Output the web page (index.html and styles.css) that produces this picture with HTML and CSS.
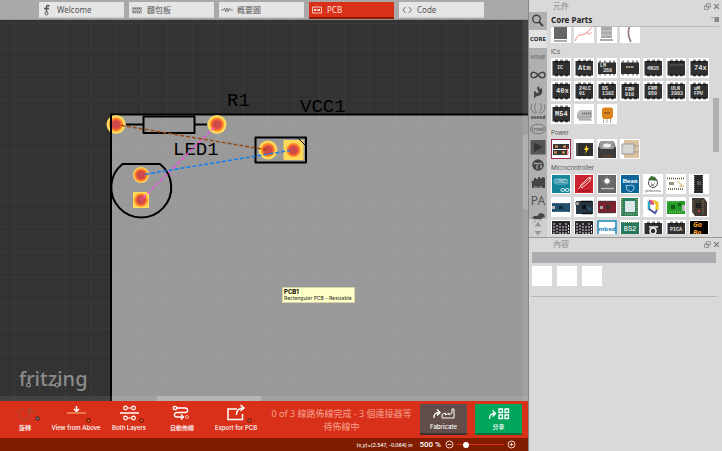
FILE: index.html
```html
<!DOCTYPE html>
<html>
<head>
<meta charset="utf-8">
<title>Fritzing</title>
<link rel="stylesheet" href="styles.css">
</head>
<body>
<svg class="defs" aria-hidden="true">
  <defs>
    <symbol id="chip" viewBox="0 0 20 20">
      <path d="M4 1.5h3v17H4zM9 1.5h3v17H9zM14 1.5h3v17h-3z" fill="#888"/>
      <rect x="1.500" y="3" width="17.5" height="14.500" fill="#303030"/>
      <path d="M4 3h3v1.500H4zM9 3h3v1.500H9zM14 3h3v1.500h-3zM4 16h3v1.500H4zM9 16h3v1.500H9zM14 16h3v1.500h-3z" fill="#171717"/>
    </symbol>
    <symbol id="chip-low" viewBox="0 0 20 20">
      <path d="M2 2.500h2v15H2zM7 2.500h2v15H7zM12 2.500h2v15h-2zM16 2.500h2v15h-2z" fill="#999"/>
      <rect x="1" y="4.500" width="18" height="11.500" fill="#303030"/>
    </symbol>
    <symbol id="pinboard" viewBox="0 0 20 20">
      <rect x="1" y="1" width="18" height="19" fill="#29252b"/>
      <path d="M3 3v17M6 5v15M9 3v17M12 6v14M15 3v17M17.500 5v15" stroke="#ddd" stroke-width="1" stroke-dasharray="2 1"/>
    </symbol>
    <symbol id="float" viewBox="0 0 6 6"><path d="M2 .5h3.500v3H2zM.5 2.500H4v3H.5z" fill="none" stroke="#888" stroke-width=".7"/></symbol>
    <symbol id="close" viewBox="0 0 6 6"><path d="M1 1l4 4M5 1L1 5" stroke="#777" stroke-width="1"/></symbol>
    <symbol id="drop" viewBox="0 0 5 5"><circle cx="2.500" cy="2.500" r="2.300" fill="#801c00"/><path d="M1.300 2h2.400L2.500 3.500z" fill="#f0a090"/></symbol>
  </defs>
</svg>
<div class="app">
  <main class="editor">
    <nav class="views">
      <button class="view"><svg class="view-icon" viewBox="0 0 12 12"><path d="M8.500 2C6 .5 5.500 2 5.500 4v4M3 4.500h5" fill="none" stroke="#555" stroke-width="1.500"/><circle cx="5.500" cy="9.500" r="1.400" fill="none" stroke="#555"/></svg>Welcome</button>
      <button class="view"><svg class="view-icon" viewBox="0 0 12 12"><rect x="1" y="3" width="10" height="6.500" fill="#aaa"/><path d="M2 4.500h8M2 8h8" stroke="#666" stroke-dasharray="1 1"/><path d="M2 6.200h8" stroke="#ddd" stroke-dasharray="1 1"/></svg>麵包板</button>
      <button class="view"><svg class="view-icon" viewBox="0 0 12 12"><path d="M0 6h2.500l1-2 1.300 4L6 4l1.300 4 1.200-4 1 2H12" fill="none" stroke="#777" stroke-width=".9"/></svg>概要圖</button>
      <button class="view view-active"><svg class="view-icon" viewBox="0 0 12 12"><path d="M1.500 3h9v6h-9z" fill="none" stroke="#ffc8bd"/><path d="M3 6h6" stroke="#ffc8bd"/><circle cx="4" cy="6" r="1" fill="#fff"/><circle cx="8" cy="6" r="1" fill="#fff"/></svg>PCB</button>
      <button class="view"><svg class="view-icon" viewBox="0 0 12 12"><path d="M4.500 3L2 6l2.500 3M8 3l2.500 3L8 9" fill="none" stroke="#777"/></svg>Code</button>
    </nav>

    <section class="canvas">
      <svg class="board" width="100%" height="100%">
        <defs>
          <pattern id="grid" x="14" y="3" width="25.400" height="25.400" patternUnits="userSpaceOnUse">
            <path d="M.5 0v25.400M0 .5h25.400" stroke="#fff" stroke-opacity=".035" fill="none"/>
          </pattern>
        </defs>
        <rect x="111" y="94.500" width="4000" height="4000" fill="#999" stroke="#000" stroke-width="2"/>
        <rect width="100%" height="100%" fill="url(#grid)"/>
        <g font-family="Liberation Mono, monospace" font-size="19" fill="#000">
          <text x="227" y="86">R1</text>
          <text x="300" y="92">VCC1</text>
          <text x="173" y="135">LED1</text>
        </g>
        <g>
          <circle cx="116" cy="104.500" r="9.500" fill="#ffd95a"/><circle cx="116" cy="104.500" r="7" fill="#ff8c2b"/><circle cx="116" cy="104.500" r="5.500" fill="#f1602d"/><circle cx="116" cy="104.500" r="4.300" fill="#cf4a4a"/>
          <circle cx="217" cy="104.500" r="9.500" fill="#ffd95a"/><circle cx="217" cy="104.500" r="7" fill="#ff8c2b"/><circle cx="217" cy="104.500" r="5.500" fill="#f1602d"/><circle cx="217" cy="104.500" r="4.300" fill="#cf4a4a"/>
          <circle cx="141" cy="155" r="8" fill="#ffd95a"/><circle cx="141" cy="155" r="6.800" fill="#ff8c2b"/><circle cx="141" cy="155" r="5.300" fill="#f1602d"/><circle cx="141" cy="155" r="4.300" fill="#cf4a4a"/>
          <rect x="133" y="172" width="16" height="16" fill="#ffd95a"/><circle cx="141" cy="180" r="6.800" fill="#ff8c2b"/><circle cx="141" cy="180" r="5.300" fill="#f1602d"/><circle cx="141" cy="180" r="4.300" fill="#cf4a4a"/>
          <circle cx="268" cy="130" r="9.500" fill="#ffd95a"/><circle cx="268" cy="130" r="7" fill="#ff8c2b"/><circle cx="268" cy="130" r="5.500" fill="#f1602d"/><circle cx="268" cy="130" r="4.300" fill="#cf4a4a"/>
          <rect x="283.500" y="120" width="20" height="20" fill="#ffd95a"/><circle cx="293.500" cy="130" r="7" fill="#ff8c2b"/><circle cx="293.500" cy="130" r="5.500" fill="#f1602d"/><circle cx="293.500" cy="130" r="4.300" fill="#cf4a4a"/>
        </g>
        <path d="M111 95v20" stroke="#000" stroke-width="2"/>
        <g fill="none" stroke="#000" stroke-width="2" stroke-linejoin="round">
          <path d="M143.500 96.500h51v16.500h-51zM126 104.500h17.500M194.500 104.500H207"/>
          <path d="M255.500 117.500H306v25h-50.500z"/>
          <path d="M298 118l8 8" stroke-width="1"/>
          <path d="M122.500 144H160A30 30 0 1 1 122.500 144z"/>
        </g>
        <g fill="none" stroke-width="1.500" stroke-dasharray="4 2">
          <path d="M121 105.300L268 130" stroke="#964b14"/>
          <path d="M214 107.500L141 180" stroke="#f04fe0"/>
          <path d="M145 154.300L290 130.500" stroke="#1480f0"/>
        </g>
      </svg>
      <div class="logo">fritzing<svg class="logo-nodes" viewBox="0 0 70 24"><g fill="#333" stroke="#8b8b8b" stroke-width="1.200"><circle cx="9.500" cy="18" r="1.900"/><circle cx="38" cy="18" r="1.900"/></g></svg></div>
      <div class="tooltip"><strong>PCB1</strong><span>Rectangular PCB - Resizable</span></div>
      <div class="scroll-y"><i></i></div>
      <div class="scroll-x"><i></i></div>
    </section>

    <footer class="toolbar">
      <button class="tool"><svg class="tool-icon" viewBox="0 0 32 20"><path d="M15 5.500a5.500 5.500 0 1 0 6 6V7M17.500 10L21 6l4 4" fill="none" stroke="#b34732" stroke-width="1.500"/><use class="drop-off" href="#drop" x="26" y="13" width="5" height="5"/></svg>旋轉</button>
      <button class="tool"><svg class="tool-icon" viewBox="0 0 32 20"><path d="M16.500 3v5M14 6l2.500 2.500L19 6" fill="none" stroke="#fff" stroke-width="1.500"/><path d="M7 10h19" stroke="#ffc07a"/><use href="#drop" x="26" y="15" width="5" height="5"/></svg>View from Above</button>
      <button class="tool"><svg class="tool-icon" viewBox="0 0 32 20"><path d="M7 10h19" stroke="#fff" stroke-width="1.500"/><g fill="none" stroke="#fff" stroke-width="1.200"><circle cx="12.500" cy="5" r="1.800"/><circle cx="20.500" cy="5" r="1.800"/><path d="M14.500 5h4M14.500 15h4"/><circle cx="12.500" cy="15" r="1.800"/><circle cx="20.500" cy="15" r="1.800"/></g><use href="#drop" x="26" y="15" width="5" height="5"/></svg>Both Layers</button>
      <button class="tool"><svg class="tool-icon" viewBox="0 0 32 20"><g fill="none" stroke="#fff" stroke-width="1.300"><circle cx="9" cy="5" r="1.700"/><path d="M11 5h8c3.500 0 3.500 4.500 0 4.500h-8c-3.500 0-3.500 4.500 0 4.500h6M15 11.500l2.500 2.500-2.500 2.500"/></g><circle cx="21" cy="14" r="1.500" fill="none" stroke="#ffb090"/></svg>自動佈線</button>
      <button class="tool"><svg class="tool-icon" viewBox="0 0 32 20"><path d="M17 6H8v10.500h14.500V11M16.500 12c0-5 2-7 7-7M20.500 2l3.500 3-3.500 3" fill="none" stroke="#fff" stroke-width="1.500"/><use href="#drop" x="27" y="15" width="5" height="5"/></svg>Export for PCB</button>
      <p class="message">0 of 3 線路佈線完成 - 3 個連接器等待佈線中</p>
      <button class="action fabricate"><svg class="action-icon" viewBox="0 0 24 14"><path d="M2 11c0-4 1-5.500 5-5.500M5 2.500l3 3-3 3" fill="none" stroke="#fff" stroke-width="1.400"/><path d="M10 11V7.500L13.500 6v2L17 6v2l3-2V2h2v9z" fill="none" stroke="#fff"/></svg>Fabricate</button>
      <button class="action share"><svg class="action-icon" viewBox="0 0 24 14"><path d="M2.500 12c0-4 1-5.500 5-5.500M5.500 3.500l3 3-3 3" fill="none" stroke="#fff" stroke-width="1.400"/><path d="M12 2h3.500v3.500H12zM18 2h3.500v3.500H18zM12 8h3.500v3.500H12zM18 8h3.500v3.500H18z" fill="none" stroke="#fff" stroke-width="1.300"/></svg>分享</button>
    </footer>

    <div class="status">
      <span class="coords">(x,y)=(2.547, -0.064) in</span>
      <label class="zoom-value" for="zoom">500 %</label>
      <button class="zoom-button" aria-label="Zoom out"><svg viewBox="0 0 9 9"><circle cx="4.500" cy="4.500" r="3.500" fill="none" stroke="#f3d5cc"/><path d="M2.800 4.500h3.400" stroke="#f3d5cc"/></svg></button>
      <input id="zoom" class="zoom" type="range" min="0" max="100" value="14">
      <button class="zoom-button" aria-label="Zoom in"><svg viewBox="0 0 9 9"><circle cx="4.500" cy="4.500" r="3.500" fill="none" stroke="#f3d5cc"/><path d="M2.800 4.500h3.400M4.500 2.800v3.400" stroke="#f3d5cc"/></svg></button>
    </div>
  </main>

  <aside class="side">
    <section class="parts">
      <header class="dock"><h2>元件</h2><button aria-label="Float"><svg><use href="#float"/></svg></button><button aria-label="Close"><svg><use href="#close"/></svg></button></header>
      <div class="bins">
        <nav class="bin-tabs">
          <button class="bin" aria-label="Search"><svg viewBox="0 0 18 18"><circle cx="7.500" cy="7" r="3.800" fill="none" stroke="#444" stroke-width="1.400"/><path d="M10 10l4 4" stroke="#444" stroke-width="2"/></svg></button>
          <button class="bin bin-active">CORE</button>
          <button class="bin bin-mine">MINE</button>
          <button class="bin" aria-label="Arduino"><svg viewBox="0 0 18 18"><path d="M9 9C7 6 2 5 2 9s5 3 7 0 7-4 7 0-5 3-7 0z" fill="none" stroke="#444" stroke-width="1.500"/></svg></button>
          <button class="bin" aria-label="SparkFun"><svg viewBox="0 0 18 18"><path d="M5 15V7.500h2c0 2 2.500 2 2.500 0S7 5 8.500 3c1.500-1 2 0 1.500 1s2 1.500 2-.5c2 2 2 8-3 8.500-2 0-3 1-4 3z" fill="#444"/></svg></button>
          <button class="bin" aria-label="Seeed"><svg viewBox="0 0 18 18"><path d="M7 12C2 9 1 6 3 2M11 12c5-3 6-6 4-10M8 11C5 7 5 4 7 1M10 11c3-4 3-7 1-10" fill="none" stroke="#777"/><text x="9" y="16.500" text-anchor="middle" font-size="5" font-weight="700" fill="#444">seeed</text></svg></button>
          <button class="bin" aria-label="Intel"><svg viewBox="0 0 18 18"><ellipse cx="9" cy="9" rx="7.500" ry="4.800" fill="none" stroke="#777"/><text x="9" y="11" text-anchor="middle" font-size="6" fill="#555">intel</text></svg></button>
          <button class="bin" aria-label="Play"><svg viewBox="0 0 18 18"><path d="M1.500 2h15v14.500h-15z" fill="#555"/><path d="M5 4.500l8.500 4.700L5 14z" fill="#343434"/></svg></button>
          <button class="bin" aria-label="Parallax"><svg viewBox="0 0 18 18"><circle cx="9" cy="9" r="5.800" fill="#444"/><path d="M5 8c2-2 3 0 4 0s2-2 4-.5M8 9v4M11 9c2 0 2 3 0 2.500" fill="none" stroke="#aaa" stroke-width="1.200"/></svg></button>
          <button class="bin" aria-label="Locomotive"><svg viewBox="0 0 18 18"><path d="M2 8l3-2V4h2v1h2V3h2v2l3-2 2 1v10H3V9z" fill="#444"/><path d="M5 14a1.500 1.500 0 0 1 3 0M10 14a1.500 1.500 0 0 1 3 0" fill="none" stroke="#aaa"/></svg></button>
          <button class="bin bin-pa">PA</button>
          <button class="bin" aria-label="Animal"><svg viewBox="0 0 18 18"><path d="M2 9l3-3 3 0 3-3 4 1 1 3-3 1-1 3H9l-1-2-2 4H4l1-5z" fill="#444"/></svg></button>
          <div class="bin-scroll"><svg viewBox="0 0 18 18"><path d="M5.500 7.500L9 2.500l3.500 5zM5.500 12h7L9 16.500z" fill="#999"/></svg></div>
        </nav>
        <div class="bin-content">
          <div class="bin-title"><h3>Core Parts</h3><button aria-label="Menu"><svg class="menu-icon" viewBox="0 0 8 6"><path d="M0 1h2.500L1.200 2.500zM3.500 1H8v5H3.500z" fill="#888"/></svg></button></div>
          <div class="bin-list">
            <div class="tiles tiles-cut">
              <svg class="tile" viewBox="0 0 20 20"><path d="M3 2h13v14H3z" fill="#666"/><path d="M3 17h13v2H3z" fill="#aaa"/></svg>
              <svg class="tile" viewBox="0 0 20 20"><path d="M1.500 18c1-9 8-4 12-9s5-3 4-6M13 9c1 4 5 1 4 0" fill="none" stroke="#f28a86"/></svg>
              <svg class="tile" viewBox="0 0 20 20"><path d="M4 3h11v12H4zM3 16h13v2H3z" fill="#aaa"/><path d="M4 8h11M4 12h11" stroke="#ccc"/></svg>
              <svg class="tile" viewBox="0 0 20 20"><path d="M10 2c-2 5-2 12 1 17" fill="none" stroke="#9b7b80" stroke-width="1.700"/></svg>
            </div>
            <h4>ICs</h4>
            <div class="tiles chips">
              <svg class="tile" viewBox="0 0 20 20"><use href="#chip"/><text x="6" y="11">IC</text></svg>
              <svg class="tile" viewBox="0 0 20 20"><use href="#chip"/><text class="big" x="4" y="12">Atm</text></svg>
              <svg class="tile" viewBox="0 0 20 20"><use href="#chip-low"/><text x="3" y="9">LM</text><text x="6" y="14">358</text></svg>
              <svg class="tile" viewBox="0 0 20 20"><use href="#chip-low"/><path d="M6 9h8" stroke="#a89c88" stroke-width="2" stroke-dasharray="2 .5"/></svg>
              <svg class="tile" viewBox="0 0 20 20"><use href="#chip"/><text x="4" y="12">4N35</text></svg>
              <svg class="tile" viewBox="0 0 20 20"><use href="#chip"/><path d="M4 7h14" stroke="#76695c" stroke-dasharray="2 .5"/></svg>
              <svg class="tile" viewBox="0 0 20 20"><use href="#chip"/><text class="big" x="5" y="12">74x</text></svg>
              <svg class="tile" viewBox="0 0 20 20"><use href="#chip"/><text class="big" x="5" y="12">40x</text></svg>
              <svg class="tile" viewBox="0 0 20 20"><use href="#chip"/><text x="5" y="9">24LC</text><text x="5" y="14">01</text></svg>
              <svg class="tile" viewBox="0 0 20 20"><use href="#chip"/><text x="5" y="9">DS</text><text x="5" y="14">1302</text></svg>
              <svg class="tile" viewBox="0 0 20 20"><use href="#chip"/><text x="5" y="10">FRM</text><text x="5" y="15">010</text></svg>
              <svg class="tile" viewBox="0 0 20 20"><use href="#chip"/><text x="5" y="9">FRM</text><text x="5" y="14">050</text></svg>
              <svg class="tile" viewBox="0 0 20 20"><use href="#chip"/><text x="5" y="9">ULN</text><text x="5" y="14">2003</text></svg>
              <svg class="tile" viewBox="0 0 20 20"><use href="#chip"/><text x="5" y="9">uM</text><text x="5" y="14">FPU</text></svg>
              <svg class="tile" viewBox="0 0 20 20"><use href="#chip"/><text class="big" x="4" y="12">M54</text></svg>
              <svg class="tile" viewBox="0 0 20 20"><path d="M3 9l3-3h12v7l-2 3H5l-2-2z" fill="#bbb"/><path d="M3 13h15M5 16h13" stroke="#999"/><path d="M8 9.500h9" stroke="#777" stroke-width="2" stroke-dasharray="1.500 .5"/></svg>
              <svg class="tile" viewBox="0 0 20 20"><path d="M6.500 14v5M10 14v5M13.500 14v5" stroke="#aaa"/><path d="M5 5l1.500-1.500h8L16 5v8l-2 2H7l-2-2z" fill="#d9861c"/><path d="M7 9h6" stroke="#a86513" stroke-width="2"/></svg>
            </div>
            <h4>Power</h4>
            <div class="tiles">
              <svg class="tile tile-selected" viewBox="0 0 20 20"><path d="M2 5h16v5H2zM2 11h14v5H2z" fill="#333"/><path d="M4 7.500h3M12 7.500h3M3 13.500h3M11 13.500h3" stroke="#c88650" stroke-width="2.500"/><path d="M17 8c-3 3 2 4-1 8" fill="none" stroke="#d33"/></svg>
              <svg class="tile" viewBox="0 0 20 20"><path d="M2 4h17v13H2z" fill="#303030"/><path d="M2 4h2v13H2z" fill="#555"/><path d="M13 6l-3 5h2l-1 4 4-6h-2z" fill="#f8d329"/></svg>
              <svg class="tile" viewBox="0 0 20 20"><path d="M1 9l2-6 2-1h10l2 1 2 6v10H1z" fill="#3c3c3c"/><path d="M2 8l1-5 2-1h10l2 1 1 5-2 2H4z" fill="#999"/><ellipse cx="10" cy="6.500" rx="4" ry="2" fill="#eee"/><path d="M5 17h10" stroke="#7d4a22"/></svg>
              <svg class="tile" viewBox="0 0 20 20"><path d="M4 1h15v18H4z" fill="#dec3a0"/><path d="M2 5h12v10H2z" fill="#d7d7d2" stroke="#999"/><path d="M14 7h5M14 13h5" stroke="#999"/></svg>
            </div>
            <h4>Microcontroller</h4>
            <div class="tiles">
              <svg class="tile" viewBox="0 0 20 20"><path d="M1 1h18v18H1z" fill="#16859a"/><rect x="3" y="5" width="14" height="5" rx="2.500" fill="none" stroke="#9cd3dc" stroke-width=".7"/><text x="10" y="9.300" font-size="5" text-anchor="middle" fill="#fff">UNO</text><path d="M14 16c-1-2-4-2-4 0s3 2 4 0 4-2 4 0-3 2-4 0z" fill="none" stroke="#fff"/></svg>
              <svg class="tile" viewBox="0 0 20 20"><path d="M1 1h18v18H1z" fill="#c9232d"/><path d="M4 15L16 4M6 12l8-8 3-1-1 4-8 7z" stroke="#f6c9cb" fill="none"/><path d="M4 17h12" stroke="#8c101a"/></svg>
              <svg class="tile" viewBox="0 0 20 20"><path d="M1 1h18v18H1z" fill="#666"/><path d="M10 2v10M5 7h10M6.500 3.500l7 7M13.500 3.500l-7 7" stroke="#aaa" stroke-width=".7"/><circle cx="10" cy="7" r="2.500" fill="#fff"/><path d="M4 14.500h13" stroke="#bbb" stroke-width="1.500"/></svg>
              <svg class="tile" viewBox="0 0 20 20"><path d="M1 1h18v18H1z" fill="#0b6599"/><text x="10" y="9" font-size="7" font-weight="700" text-anchor="middle" fill="#fff" font-family="Liberation Serif, serif">Bean</text><path d="M6 11l3 1 1-1 4 1v3l-3 3-4-2z" fill="none" stroke="#9ccbe4"/></svg>
              <svg class="tile" viewBox="0 0 20 20"><circle cx="10" cy="9" r="4.500" fill="#fff" stroke="#444"/><path d="M5 6l3-4 4 1 3 4z" fill="#416c35"/><path d="M8 9h.8M11 9h.8M8 11h3" stroke="#333"/><text x="10" y="18" font-size="4" text-anchor="middle" fill="#333">pinoccio</text></svg>
              <svg class="tile" viewBox="0 0 20 20"><path d="M1 4.500h17M2 15h16" stroke="#544c2a" stroke-width="1.500" stroke-dasharray="1 1"/><path d="M3 8h5v3H3z" fill="#9a9478"/><path d="M11 7l5 4M13 12h5" stroke="#c7ad4d"/></svg>
              <svg class="tile" viewBox="0 0 20 20"><path d="M5 1h9v18H5z" fill="#28282a"/><path d="M8 7h4v4H8z" fill="#555"/><path d="M5.500 2v16M13.500 2v16" stroke="#858377" stroke-dasharray="1 1"/></svg>
              <svg class="tile" viewBox="0 0 20 20"><path d="M1 6h18v9H1z" fill="#20506d"/><path d="M2 6.500h16M2 14.500h16" stroke="#5f7f8f" stroke-dasharray="1 1"/><path d="M8 9h4v3H8z" fill="#122b39"/><path d="M1 9h3v3H1z" fill="#bbb"/></svg>
              <svg class="tile" viewBox="0 0 20 20"><path d="M2 4h17v13H2z" fill="#263642"/><path d="M1 5h4v3H1z" fill="#999"/><path d="M8 8h4v4H8z" fill="#111"/><path d="M7 4.500h11M8 16.500h10" stroke="#111" stroke-width="1.500"/><path d="M13 10l4 3" stroke="#377da8"/></svg>
              <svg class="tile" viewBox="0 0 20 20"><path d="M1 4h18v12H1z" fill="#7e202d"/><path d="M2 4.500h16M2 15.500h16" stroke="#413737" stroke-dasharray="2 .5" stroke-width="1.500"/><path d="M9 8h4v4H9z" fill="#333"/><path d="M3 9h3v3H3z" fill="#aaa"/></svg>
              <svg class="tile" viewBox="0 0 20 20"><path d="M1 1h17v18H1z" fill="#2d805b"/><path d="M5 4h10v11H5z" fill="#dbe9eb"/><path d="M2 2v16M17 2v16M5 17h10" stroke="#d5c575" stroke-dasharray="1 1"/></svg>
              <svg class="tile" viewBox="0 0 20 20"><path d="M6 2.500l5 1.500v4l-5-1z" fill="#e93f87"/><path d="M6 4v9" stroke="#28a8c3" stroke-width="2.500"/><path d="M10 4l4 2v7" fill="none" stroke="#e8c626" stroke-width="3"/><path d="M6 12l6 4 2-3" fill="none" stroke="#55599e" stroke-width="2"/></svg>
              <svg class="tile" viewBox="0 0 20 20"><path d="M1 4h18v13H1z" fill="#259c28"/><path d="M5 8h4v4H5zM12 6h3v3h-3z" fill="#135b16"/><path d="M2 5h12M3 15h14" stroke="#a1c877" stroke-dasharray="1 1"/><path d="M16 8h3v6h-3z" fill="#bbb"/></svg>
              <svg class="tile" viewBox="0 0 20 20"><path d="M3 1h12l3 4v14H6l-3-4z" fill="#403a32"/><path d="M4 3v13M14 3v14" stroke="#99825d" stroke-dasharray="1 1"/><path d="M7 6h5v5H7z" fill="#222"/><path d="M9 13h2v2H9z" fill="#d33"/></svg>
              <svg class="tile" viewBox="0 0 20 20"><use href="#pinboard"/></svg>
              <svg class="tile" viewBox="0 0 20 20"><use href="#pinboard"/></svg>
              <svg class="tile" viewBox="0 0 20 20"><path d="M1 1h18v19H1z" fill="#fff" stroke="#1684b9" stroke-width="1.500"/><text x="10" y="11" font-size="6" font-weight="700" text-anchor="middle" fill="#1684b9">mbed</text></svg>
              <svg class="tile" viewBox="0 0 20 20"><path d="M1 2h18v18H1z" fill="#27775b"/><path d="M2 2.500h16" stroke="#c8c8a1" stroke-dasharray="1 1"/><text x="10" y="11" font-size="7" text-anchor="middle" fill="#fff" font-family="Liberation Mono, monospace">BS2</text></svg>
              <svg class="tile" viewBox="0 0 20 20"><use href="#chip"/><circle cx="10" cy="11" r="3" fill="none" stroke="#eee" stroke-width="1.500"/><path d="M6 7h9" stroke="#eee" stroke-width="1.500"/></svg>
              <svg class="tile chips" viewBox="0 0 20 20"><use href="#chip"/><text x="4" y="11">PICA</text></svg>
              <svg class="tile" viewBox="0 0 20 20"><path d="M1 1h18v19H1z" fill="#000"/><text x="4" y="7" font-size="7" font-weight="700" font-style="italic" fill="#ffa32b">Go</text><text x="4" y="15" font-size="7" font-weight="700" font-style="italic" fill="#ffa32b">Bo</text></svg>
            </div>
            <div class="list-scroll"></div>
          </div>
        </div>
      </div>
    </section>

    <section class="inspector">
      <header class="dock"><h2>內容</h2><button aria-label="Float"><svg><use href="#float"/></svg></button><button aria-label="Close"><svg><use href="#close"/></svg></button></header>
      <div class="name-bar"></div>
      <div class="previews"><i></i><i></i><i></i></div>
      <hr>
    </section>
  </aside>
</div>
</body>
</html>
```

FILE: styles.css
```css
* { box-sizing: border-box; }

body {
  margin: 0;
  font-family: "Noto Sans", "Noto Sans CJK TC", sans-serif;
  font-size: 8px;
}

h2, h3, h4, p { margin: 0; font-weight: 400; }

button {
  border: 0;
  padding: 0;
  background: none;
  color: inherit;
  font: inherit;
}

svg { display: block; }

.defs { position: absolute; width: 0; height: 0; }

.app {
  display: grid;
  grid-template-columns: minmax(0, 1fr) 194px;
  height: 100vh;
}

/* Editor column */
.editor {
  display: grid;
  grid-template-rows: 20px minmax(0, 1fr) 37px 13px;
  min-width: 0;
}

.views {
  display: flex;
  gap: 5px;
  padding: 2px 0 0 39px;
  background: #a9a9a9;
  border-bottom: 1px solid #929292;
}

.view {
  display: flex;
  align-items: center;
  gap: 4px;
  width: 85px;
  height: 16px;
  padding-left: 2px;
  background: #e5e5e5;
  color: #555;
  border-bottom: 1px solid #ccc;
}

.view-icon { width: 12px; height: 12px; }

.view-active {
  height: 17px;
  background: #d9301a;
  color: #ffe3dd;
  border-bottom: 2px solid #8c1d00;
}

.canvas {
  position: relative;
  overflow: hidden;
  background: #333;
}

.board { position: absolute; inset: 0; }

.logo {
  position: absolute;
  left: 19px;
  bottom: 10px;
  font-size: 20px;
  line-height: 24px;
  font-weight: 500;
  color: #8b8b8b;
}

.logo-nodes {
  position: absolute;
  left: 0;
  top: 0;
  width: 70px;
  height: 24px;
}

.tooltip {
  position: absolute;
  left: 282px;
  top: 267px;
  display: flex;
  flex-direction: column;
  padding: 0 2px 0 1px;
  background: #ffffc7;
  border: 1px solid #d5d5a8;
  color: #222;
  font: 5px/7px Inter, sans-serif;
}

.tooltip strong { font-size: 6px; color: #000; }

.scroll-y,
.scroll-x { position: absolute; background: rgb(255 255 255 / 8%); }

.scroll-y { top: 0; right: 0; bottom: 0; width: 5px; padding-top: 115px; }
.scroll-x { left: 0; right: 0; bottom: 0; height: 5px; padding-left: 157px; }
.scroll-y i { display: block; height: 74px; background: #b0b0b0; }
.scroll-x i { display: block; width: 104px; height: 5px; background: #b5b5b5; }

.toolbar {
  display: grid;
  grid-template-columns: 50px 52px 54px 52px 56px minmax(0, 1fr) 47px 47px;
  padding-right: 6px;
  background: #d9301a;
  color: #fff;
}

.tool {
  display: flex;
  flex-direction: column;
  align-items: center;
  gap: 1px;
  padding-top: 2px;
  font: 500 6px/8px Inter, "Noto Sans CJK TC", sans-serif;
  white-space: nowrap;
}

.tool-icon { width: 32px; height: 20px; }
.drop-off { filter: grayscale(1); opacity: .8; }

.message {
  align-self: center;
  justify-self: center;
  max-width: 146px;
  font-size: 9px;
  line-height: 13px;
  text-align: center;
  color: #f6a18f;
}

.action {
  display: flex;
  flex-direction: column;
  align-items: center;
  gap: 2px;
  height: 31px;
  margin-top: 3px;
  padding-top: 3px;
  font: 500 6px/8px Inter, "Noto Sans CJK TC", sans-serif;
}

.action-icon { width: 24px; height: 14px; }
.fabricate { background: #614d49; border-bottom: 2px solid #40312e; }
.share { background: #00a65a; border-bottom: 2px solid #087238; }

.toolbar .message { margin-right: 9px; }
.toolbar .fabricate { margin-left: -8px; margin-right: 8px; }

.status {
  display: flex;
  align-items: center;
  justify-content: flex-end;
  padding-right: 12px;
  background: #801c00;
  color: #fff;
  font-family: Inter, sans-serif;
}

.coords { margin-right: 7px; font-size: 5px; font-weight: 500; }
.zoom-value { margin-right: 4px; font-family: Roboto, sans-serif; font-weight: 500; }
.zoom-button { width: 9px; height: 9px; }

.zoom {
  appearance: none;
  width: 47px;
  height: 7px;
  margin: 0 3px;
  background: linear-gradient(#d9301a, #d9301a) center / 100% 1px no-repeat;
}

.zoom::-webkit-slider-thumb {
  appearance: none;
  width: 6px;
  height: 6px;
  border-radius: 50%;
  background: #fff;
}

/* Docked panels */
.side {
  display: grid;
  grid-template-rows: 238px minmax(0, 1fr);
  background: #d9d9d9;
  border-left: 1px solid #868686;
}

.parts {
  display: grid;
  grid-template-rows: 12px minmax(0, 1fr);
  min-height: 0;
  border-bottom: 1px solid #999;
}

.dock {
  display: flex;
  align-items: center;
  gap: 2px;
  height: 12px;
  padding: 0 2px 0 24px;
}

.dock h2 { flex: 1; font-size: 8px; line-height: 12px; color: #888; }
.dock svg { width: 7px; height: 7px; }

.bins {
  display: grid;
  grid-template-columns: 18px minmax(0, 1fr);
  min-height: 0;
}

.bin-tabs {
  position: relative;
  overflow: hidden;
  background: #b0b0b0;
}

.bin {
  display: grid;
  place-items: center;
  width: 18px;
  height: 18px;
  font-size: 6px;
}

.bin svg { width: 18px; height: 18px; }
.bin-active { background: #e2e2e2; color: #222; font-weight: 700; }
.bin-mine { color: #666; }
.bin-pa { color: #555; font-size: 12px; line-height: 18px; }

.bin-scroll {
  position: absolute;
  inset: auto 0 0;
  height: 18px;
  background: rgb(217 217 217 / 75%);
}

.bin-content {
  display: grid;
  grid-template-rows: 15px minmax(0, 1fr);
  min-width: 0;
  min-height: 0;
  padding: 0 3px 3px 4px;
}

.bin-title {
  display: flex;
  align-items: center;
  justify-content: space-between;
  border-bottom: 1px solid #bbb;
}

.bin-title h3 { font-size: 8px; font-weight: 700; color: #222; }
.menu-icon { width: 8px; height: 6px; }

.bin-list { position: relative; overflow: hidden; }

.bin-list h4 {
  padding-top: 3px;
  height: 15px;
  font: 6px/12px Inter, sans-serif;
  color: #555;
}

.tiles {
  display: grid;
  grid-template-columns: repeat(7, 20px);
  gap: 3px;
}

.tiles-cut { margin-top: -4px; }
.tile { width: 20px; height: 20px; background: #fff; }
.tile-selected { outline: 1px solid #9c274f; outline-offset: -1px; }

.chips text {
  fill: #e5e5e5;
  font-family: "Liberation Mono", monospace;
  font-size: 5px;
  font-weight: 700;
}

.chips .big { font-size: 7px; }

.list-scroll {
  position: absolute;
  top: 71px;
  right: 0;
  width: 6px;
  height: 54px;
  background: #b0b0b0;
}

.inspector hr {
  margin: 10px 5px 0 2px;
  border: 0;
  border-top: 1px solid #b8b8b8;
}

.name-bar {
  height: 11px;
  margin: 2px 6px 3px 3px;
  background: #adacb1;
}

.previews { display: flex; gap: 5px; padding-left: 3px; }
.previews i { width: 20px; height: 20px; background: #fff; }
```
